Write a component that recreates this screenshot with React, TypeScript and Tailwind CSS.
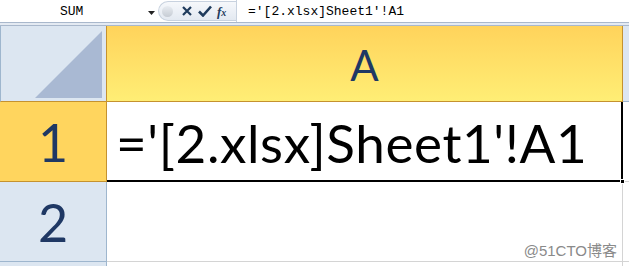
export default function App() {
  const mono = { fontFamily: '"Liberation Mono", "DejaVu Sans Mono", monospace' }
  return (
    <div
      className="relative w-[629px] h-[266px] overflow-hidden bg-white flex flex-col"
      style={{ fontFamily: 'Lato, "Open Sans", sans-serif' }}
    >
      {/* Formula bar */}
      <div className="h-[23px] flex items-stretch border-b border-[#a9b8cc] bg-white shrink-0">
        <div className="w-[158px] relative flex items-center" style={mono}>
          <span className="absolute left-[60px] top-[4px] text-[13px] leading-[16px] text-black">SUM</span>
          <svg className="absolute left-[148px] top-[11px]" width="7" height="4" viewBox="0 0 7 4">
            <path d="M0 0h7L3.5 4z" fill="#222" />
          </svg>
        </div>
        <div className="w-[78px] my-[1px] flex items-center rounded-l-[11px] border border-r-0 border-[#c8d2df] bg-gradient-to-b from-[#f6f8fb] to-[#e3e9f1]">
          <div className="ml-[3px] w-[11px] h-[11px] rounded-full bg-gradient-to-b from-[#e8ecf1] to-[#c6ccd4]" />
          <svg className="ml-[9px]" width="10" height="10" viewBox="0 0 10 10">
            <path d="M1 1l8 8M9 1l-8 8" stroke="#1f3b5c" strokeWidth="2.2" />
          </svg>
          <svg className="ml-[6px]" width="14" height="12" viewBox="0 0 14 12">
            <path d="M1 6.5l4 4L13 1.5" stroke="#1f3b5c" strokeWidth="2.6" fill="none" />
          </svg>
          <span
            className="ml-[5px] text-[13px] italic font-bold text-[#1f3b5c] leading-none"
            style={{ fontFamily: '"Liberation Serif", serif' }}
          >
            f<span className="text-[10px]">x</span>
          </span>
        </div>
        <div className="flex-1 border-l border-[#c8d2df] pl-[11px] flex items-center" style={mono}>
          <span className="text-[13px] leading-[16px] text-black mt-[1px]">='[2.xlsx]Sheet1'!A1</span>
        </div>
      </div>
      <div className="h-[3px] bg-[#e4eaf2] border-b border-[#a9b8cc] shrink-0" />

      {/* Column header row */}
      <div className="h-[76px] flex shrink-0">
        <div className="w-[107px] bg-[#dce6f1] border-l border-[#9eb6ce] border-r border-r-[#c5922f] border-b border-b-[#c5922f] flex items-end justify-end pr-[4px] pb-[3px]">
          <svg width="67" height="67" viewBox="0 0 67 67">
            <path d="M67 0V67H0z" fill="#a9b9d3" />
          </svg>
        </div>
        <div className="w-[516px] bg-gradient-to-b from-[#ffd35b] to-[#ffee75] border-r border-b border-[#c5922f] flex items-center justify-center">
          <span className="text-[42px] leading-none text-[#1f3864] mt-[2px]">A</span>
        </div>
        <div className="flex-1 bg-[#dce6f1] border-b border-[#9eb6ce]" />
      </div>

      {/* Row 1 */}
      <div className="h-[80px] flex shrink-0">
        <div className="w-[107px] bg-[#ffd55e] border-r border-b border-[#c5922f] flex items-center justify-center">
          <span className="text-[52px] leading-none text-[#1f3864]">1</span>
        </div>
        <div className="relative w-[516px] border-r-2 border-b-2 border-black flex items-center pl-[9px]">
          <span className="text-[53px] leading-none text-black whitespace-nowrap tracking-[0.6px] mt-[3px]">='[2.xlsx]Sheet1'!A1</span>
          <div className="absolute right-[-4px] bottom-[-4px] w-[5px] h-[5px] bg-black border border-white" />
        </div>
        <div className="flex-1 border-b border-[#d4d4d4]" />
      </div>

      {/* Row 2 */}
      <div className="h-[80px] flex shrink-0">
        <div className="w-[107px] bg-[#dce6f1] border-r border-b border-[#9eb6ce] flex items-center justify-center">
          <span className="text-[52px] leading-none text-[#1f3864]">2</span>
        </div>
        <div className="w-[516px] border-r border-b border-[#d4d4d4]" />
        <div className="flex-1 border-b border-[#d4d4d4]" />
      </div>

      {/* Row 3 */}
      <div className="flex-1 flex">
        <div className="w-[107px] bg-[#dce6f1] border-r border-[#9eb6ce]" />
        <div className="w-[516px] border-r border-[#d4d4d4]" />
      </div>

      <span
        className="absolute right-[12px] bottom-[8px] text-[15px] leading-none text-[#8a8a8a]"
        style={{ fontFamily: '"Liberation Sans", "Noto Sans CJK SC", sans-serif' }}
      >
        @51CTO博客
      </span>
    </div>
  )
}
